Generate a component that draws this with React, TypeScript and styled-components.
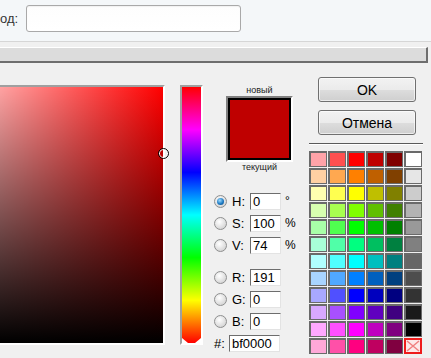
import React from 'react'
import styled, { createGlobalStyle } from 'styled-components'

const GlobalStyle = createGlobalStyle`
  html, body {
    margin: 0;
    padding: 0;
    background: #f0f0f0;
  }
  body {
    font-family: 'Liberation Sans', Arial, sans-serif;
  }
`

const Window = styled.div`
  width: 431px;
  height: 358px;
  overflow: hidden;
  background: #f0f0f0;
  color: #000;
`

const Header = styled.div`
  height: 41px;
  background: #f4f7f9;
  border-bottom: 1px solid #d6d6d6;
  display: flex;
  align-items: center;
  gap: 8px;
`

const HeaderLabel = styled.span`
  font-size: 13px;
  color: #333;
  margin-top: -4px;
`

const HeaderInput = styled.div`
  width: 213px;
  height: 25px;
  margin-top: -4px;
  border: 1px solid #a9a9a9;
  border-radius: 3px;
  background: linear-gradient(#fdfdfd, #ffffff);
  box-shadow: inset 0 1px 1px rgba(0, 0, 0, 0.05);
`

const Band = styled.div`
  margin-top: 5px;
  width: 426px;
  height: 13px;
  background: #dcdcdc;
  border-top: 1px solid #fff;
  border-right: 2px solid #6e6e6e;
  border-bottom: 2px solid #6e6e6e;
`

const Main = styled.div`
  display: flex;
  align-items: flex-start;
  padding-top: 22px;
`

const Sunken = styled.div`
  position: relative;
  border-top: 2px solid #a0a0a0;
  border-left: 2px solid #a0a0a0;
  border-right: 2px solid #fff;
  border-bottom: 2px solid #fff;
`

const ColorMap = styled(Sunken)`
  margin-left: -95px;
  width: 256px;
  height: 256px;
  background: linear-gradient(to top, #000, rgba(0, 0, 0, 0)),
    linear-gradient(to right, #fff, #f00);
`

const MapCursor = styled.div`
  position: absolute;
  right: -6px;
  top: 61px;
  width: 9px;
  height: 9px;
  border-radius: 50%;
  border: 1px solid #000;
  box-shadow: inset 0 0 0 1px #fff;
`

const HueBar = styled(Sunken)`
  margin-left: 15px;
  width: 19px;
  height: 256px;
  background: linear-gradient(
    to bottom,
    #f00 0%,
    #f0f 16.67%,
    #00f 33.33%,
    #0ff 50%,
    #0f0 66.67%,
    #ff0 83.33%,
    #f00 100%
  );
`

const HueMarker = styled.div<{ $side: 'left' | 'right' }>`
  position: absolute;
  bottom: 0;
  ${({ $side }) => ($side === 'left' ? 'left: 0;' : 'right: 0;')}
  width: 0;
  height: 0;
  border-bottom: 5px solid #fff;
  ${({ $side }) =>
    $side === 'left'
      ? 'border-right: 6px solid transparent;'
      : 'border-left: 6px solid transparent;'}
`

const MiddleColumn = styled.div`
  margin-left: 10px;
  width: 93px;
  display: flex;
  flex-direction: column;
`

const SwatchLabel = styled.div`
  font-size: 9px;
  line-height: 11px;
  text-align: center;
  color: #222;
`

const Swatch = styled.div`
  align-self: center;
  width: 63px;
  height: 62px;
  border-top: 2px solid #808080;
  border-left: 2px solid #808080;
  border-right: 2px solid #fff;
  border-bottom: 2px solid #fff;
  display: flex;
  flex-direction: column;
`

const SwatchHalf = styled.div<{ $color: string }>`
  flex: 1;
  background: ${({ $color }) => $color};
`

const SwatchInner = styled.div`
  flex: 1;
  display: flex;
  flex-direction: column;
  border: 2px solid #000;
`

const Fields = styled.div`
  margin-top: 17px;
  display: flex;
  flex-direction: column;
`

const FieldRow = styled.div<{ $gapTop?: number }>`
  height: 22px;
  display: flex;
  align-items: center;
  margin-top: ${({ $gapTop }) => $gapTop ?? 0}px;
  font-size: 13px;
`

const Radio = styled.span<{ $checked?: boolean }>`
  width: 11px;
  height: 11px;
  margin-left: 1px;
  margin-right: 5px;
  border-radius: 50%;
  border: 1px solid #8e8f8f;
  background: radial-gradient(circle at 40% 35%, #ffffff, #d9d9d9 70%, #c4c4c4);
  position: relative;
  flex-shrink: 0;
  ${({ $checked }) =>
    $checked &&
    `
    &::after {
      content: '';
      position: absolute;
      left: 2px;
      top: 2px;
      width: 7px;
      height: 7px;
      border-radius: 50%;
      background: radial-gradient(circle at 40% 35%, #9fdcff, #1e7bc4 55%, #0b3f74);
    }
  `}
`

const FieldLabel = styled.span<{ $width: number }>`
  width: ${({ $width }) => $width}px;
  flex-shrink: 0;
  font-size: 13px;
`

const HexLabel = styled(FieldLabel)`
  margin-left: 1px;
`

const NumberBox = styled.div<{ $width: number }>`
  width: ${({ $width }) => $width}px;
  height: 17px;
  box-sizing: border-box;
  background: #fff;
  border-top: 1px solid #6d6d6d;
  border-left: 1px solid #6d6d6d;
  border-right: 1px solid #e3e3e3;
  border-bottom: 1px solid #e3e3e3;
  padding-left: 2px;
  font-size: 13px;
  line-height: 15px;
  flex-shrink: 0;
`

const Unit = styled.span`
  margin-left: 4px;
  font-size: 12px;
`

const RightColumn = styled.div`
  margin-top: -8px;
  margin-left: 3px;
  width: 114px;
  display: flex;
  flex-direction: column;
`

const Button = styled.div<{ $top: number }>`
  margin-left: 9px;
  margin-top: ${({ $top }) => $top}px;
  width: 98px;
  height: 25px;
  box-sizing: border-box;
  border: 1px solid #707070;
  border-radius: 3px;
  background: linear-gradient(#f2f2f2 0%, #ebebeb 50%, #dddddd 51%, #cfcfcf 100%);
  box-shadow: inset 0 0 0 1px rgba(255, 255, 255, 0.6);
  display: flex;
  align-items: center;
  justify-content: center;
  font-size: 14px;
`

const Separator = styled.div`
  margin-top: 8px;
  height: 1px;
  background: #5a5a5a;
  border-bottom: 1px solid #fff;
`

const Palette = styled.div`
  margin-top: 6px;
  display: grid;
  grid-template-columns: repeat(6, 18px);
  grid-auto-rows: 16px;
  gap: 1px;
`

const Cell = styled.div<{ $color: string }>`
  box-sizing: border-box;
  background: ${({ $color }) => $color};
  border: 1px solid #6a6a6a;
  border-top-width: 2px;
  border-left-width: 2px;
`

const NoneCell = styled.div`
  box-sizing: border-box;
  border: 2px solid #ee1c1c;
  background: #fff;
  display: flex;
`

const palette = [
  ['#ffa3a8', '#ff5050', '#ff0000', '#bf0000', '#800000', '#ffffff'],
  ['#ffd0a3', '#ffa850', '#ff8000', '#bf6000', '#804000', '#e6e6e6'],
  ['#ffffb0', '#ffff50', '#ffff00', '#bfbf00', '#808000', '#cccccc'],
  ['#d8ffb0', '#a8ff50', '#80ff00', '#60bf00', '#408000', '#b3b3b3'],
  ['#a8ffa8', '#50ff50', '#00ff00', '#00bf00', '#008000', '#999999'],
  ['#a8ffd8', '#50ffa8', '#00ff80', '#00bf60', '#008040', '#808080'],
  ['#b0ffff', '#50ffff', '#00ffff', '#00bfbf', '#008080', '#666666'],
  ['#a8d4ff', '#50a8ff', '#0080ff', '#0060bf', '#004080', '#4d4d4d'],
  ['#a8a8ff', '#5050ff', '#0000ff', '#0000bf', '#000080', '#333333'],
  ['#d8a8ff', '#a850ff', '#8000ff', '#6000bf', '#400080', '#1a1a1a'],
  ['#ffa8ff', '#ff50ff', '#ff00ff', '#bf00bf', '#800080', '#000000'],
  ['#ffa8d8', '#ff50a8', '#ff0080', '#bf0060', '#800040', null],
]

type Field = {
  label: string
  value: string
  unit?: string
  checked?: boolean
  gapTop?: number
}

const fields: Field[] = [
  { label: 'H:', value: '0', unit: '°', checked: true },
  { label: 'S:', value: '100', unit: '%' },
  { label: 'V:', value: '74', unit: '%' },
  { label: 'R:', value: '191', gapTop: 10 },
  { label: 'G:', value: '0' },
  { label: 'B:', value: '0' },
]

export default function App() {
  return (
    <Window>
      <GlobalStyle />
      <Header>
        <HeaderLabel>од:</HeaderLabel>
        <HeaderInput />
      </Header>
      <Band />
      <Main>
        <ColorMap>
          <MapCursor />
        </ColorMap>
        <HueBar>
          <HueMarker $side="left" />
          <HueMarker $side="right" />
        </HueBar>
        <MiddleColumn>
          <SwatchLabel>новый</SwatchLabel>
          <Swatch>
            <SwatchInner>
              <SwatchHalf $color="#bf0000" />
              <SwatchHalf $color="#bf0000" />
            </SwatchInner>
          </Swatch>
          <SwatchLabel>текущий</SwatchLabel>
          <Fields>
            {fields.map((f) => (
              <FieldRow key={f.label} $gapTop={f.gapTop}>
                <Radio $checked={f.checked} />
                <FieldLabel $width={18}>{f.label}</FieldLabel>
                <NumberBox $width={31}>{f.value}</NumberBox>
                {f.unit && <Unit>{f.unit}</Unit>}
              </FieldRow>
            ))}
            <FieldRow>
              <HexLabel $width={15}>#:</HexLabel>
              <NumberBox $width={51}>bf0000</NumberBox>
            </FieldRow>
          </Fields>
        </MiddleColumn>
        <RightColumn>
          <Button $top={0}>OK</Button>
          <Button $top={8}>Отмена</Button>
          <Separator />
          <Palette>
            {palette.flat().map((c, i) =>
              c ? (
                <Cell key={i} $color={c} />
              ) : (
                <NoneCell key={i}>
                  <svg width="14" height="12" viewBox="0 0 14 12">
                    <rect x="0" y="0" width="14" height="12" fill="#fde8e8" />
                    <path d="M1 1 L13 11 M13 1 L1 11" stroke="#f08080" strokeWidth="1.5" />
                  </svg>
                </NoneCell>
              )
            )}
          </Palette>
        </RightColumn>
      </Main>
    </Window>
  )
}
